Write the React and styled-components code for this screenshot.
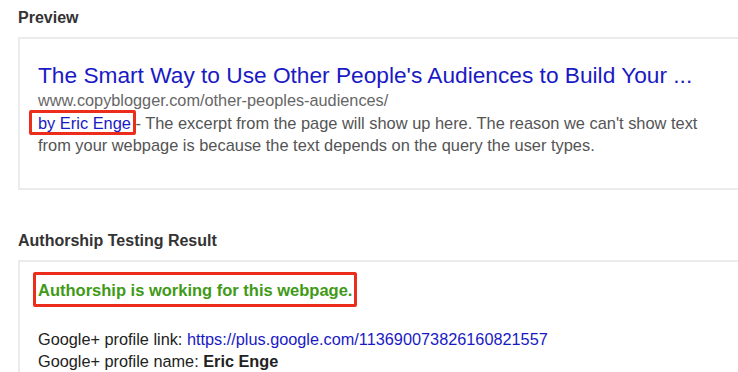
import React from "react";
import styled, { createGlobalStyle } from "styled-components";

const Global = createGlobalStyle`
  html, body { margin: 0; padding: 0; background: #fff; }
  body { font-family: "Liberation Sans", Arial, sans-serif; overflow: hidden; }
`;

const Page = styled.div`
  width: 738px;
  height: 372px;
  overflow: hidden;
  padding: 9px 0 0 18px;
  box-sizing: border-box;
`;

const Section = styled.section`
  margin-bottom: ${(p) => p.$gap || 0}px;
`;

const Heading = styled.h2`
  margin: 0 0 10px;
  font-size: 16px;
  line-height: 18px;
  font-weight: bold;
  color: #333;
`;

const Card = styled.div`
  border: 2px solid #ebebeb;
  border-right: none;
  padding: ${(p) => p.$pad};
  min-height: ${(p) => p.$minh || 0}px;
`;

const Title = styled.a`
  display: block;
  font-size: 22.7px;
  line-height: 27px;
  color: #1a1ac4;
  text-decoration: none;
  white-space: nowrap;
`;

const Url = styled.div`
  font-size: 16.3px;
  line-height: 22.5px;
  color: #666;
  white-space: nowrap;
`;

const Snippet = styled.div`
  font-size: 16.4px;
  line-height: 22.5px;
  color: #545454;
  white-space: nowrap;
`;

const Author = styled.span`
  position: relative;
  color: #1a1ac4;

  &::after {
    content: "";
    position: absolute;
    left: -9px;
    right: -5px;
    top: -4px;
    bottom: -3px;
    border: 3px solid #ec2d1c;
    border-radius: 2px;
    pointer-events: none;
  }
`;

const Highlight = styled.div`
  display: inline-block;
  margin-left: -5px;
  border: 3px solid #ec2d1c;
  border-radius: 2px;
  padding: 6px 2px 4px 2px;
`;

const Status = styled.div`
  color: #3f9a18;
  font-weight: bold;
  font-size: 16.5px;
  line-height: 19px;
  white-space: nowrap;
`;

const InfoList = styled.div`
  margin-top: 21px;
`;

const InfoLine = styled.div`
  font-size: 16.3px;
  line-height: 22px;
  color: #222;
  white-space: nowrap;
`;

const Link = styled.a`
  color: #1a1ac4;
  text-decoration: none;
`;

const Strong = styled.b`
  font-weight: bold;
  color: #222;
`;

export default function App() {
  return (
    <>
      <Global />
      <Page>
        <Section $gap={42}>
          <Heading>Preview</Heading>
          <Card $pad="23px 0 31.5px 18px">
            <Title href="#">The Smart Way to Use Other People's Audiences to Build Your ...</Title>
            <Url>www.copyblogger.com/other-peoples-audiences/</Url>
            <Snippet>
              <Author>by Eric Enge</Author> - The excerpt from the page will show up here. The reason we can't show text
            </Snippet>
            <Snippet>from your webpage is because the text depends on the query the user types.</Snippet>
          </Card>
        </Section>
        <Section>
          <Heading>Authorship Testing Result</Heading>
          <Card $pad="10px 0 0 18px" $minh={140}>
            <Highlight>
              <Status>Authorship is working for this webpage.</Status>
            </Highlight>
            <InfoList>
              <InfoLine>
                Google+ profile link: <Link href="#">https://plus.google.com/113690073826160821557</Link>
              </InfoLine>
              <InfoLine>
                Google+ profile name: <Strong>Eric Enge</Strong>
              </InfoLine>
            </InfoList>
          </Card>
        </Section>
      </Page>
    </>
  );
}
